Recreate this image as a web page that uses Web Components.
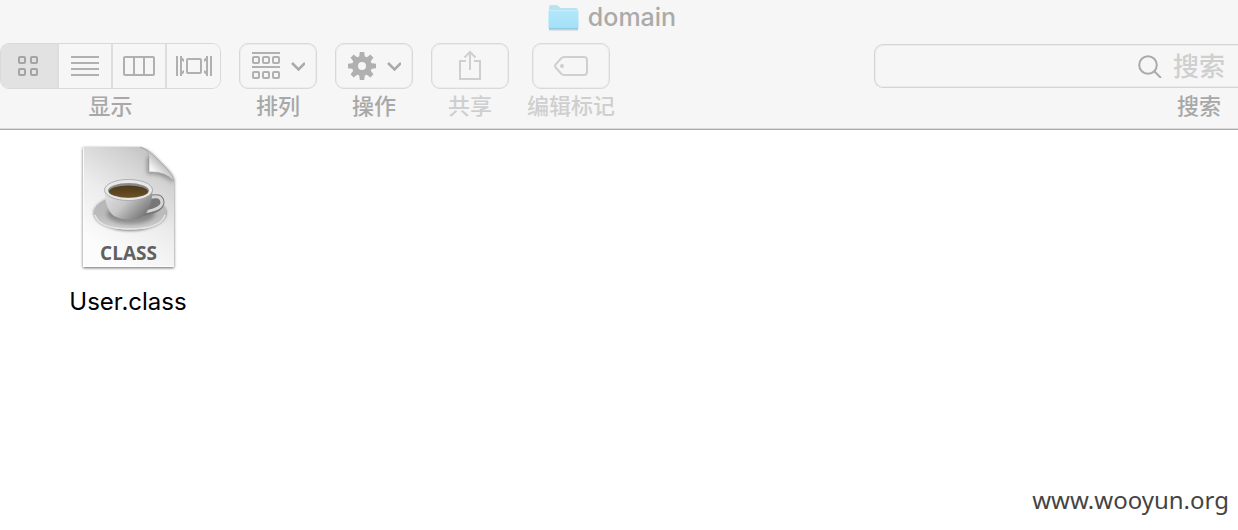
<!DOCTYPE html>
<html lang="zh-CN">
<head>
<meta charset="utf-8">
<title>domain</title>
<style>
body { margin: 0; background: #fff; font-family: Inter, "Noto Sans CJK SC", sans-serif; font-weight: 500; }
</style>
</head>
<body>
<finder-window></finder-window>

<template id="t-window">
<style>
:host { display: flex; flex-direction: column; min-height: 100vh; box-sizing: border-box; }
header { background: #f6f6f6; border-bottom: 1px solid #aaa; box-shadow: inset 0 -1px #dcdcdc; padding-bottom: 6px; }
.bar { display: flex; gap: 18px; align-items: flex-start; }
finder-search { margin-left: auto; }
main { flex: 1; padding: 10px 28px; }
footer { display: flex; justify-content: flex-end; padding: 0 9px 12px; font: 24px/36px "Noto Sans", sans-serif; color: #444; }
</style>
<header>
  <finder-title>domain</finder-title>
  <div class="bar">
    <tool-item>
      <view-switch slot="control"></view-switch>显示
    </tool-item>
    <tool-item>
      <tool-button slot="control" label="排列">
        <svg width="54" height="28" viewBox="0 0 54 28" fill="none" stroke="#b0b0b0" stroke-width="2">
          <path d="M1 1h28M1 15h28"/>
          <rect x="2" y="5" width="6" height="6" rx="1"/><rect x="12" y="5" width="6" height="6" rx="1"/><rect x="22" y="5" width="6" height="6" rx="1"/>
          <rect x="2" y="20" width="6" height="6" rx="1"/><rect x="12" y="20" width="6" height="6" rx="1"/><rect x="22" y="20" width="6" height="6" rx="1"/>
          <path d="M41 11l6.500 6.500L54 11" stroke="#aaa" stroke-width="2.500"/>
        </svg>
      </tool-button>排列
    </tool-item>
    <tool-item>
      <tool-button slot="control" label="操作">
        <svg width="54" height="28" viewBox="0 0 54 28">
          <g fill="#b0b0b0" transform="translate(15 14)">
            <path d="M-3-8L-2.200-14H2.200L3-8zM-3 8L-2.200 14H2.200L3 8zM-8-3L-14-2.200V2.200L-8 3zM8-3L14-2.200V2.200L8 3z"/>
            <path transform="rotate(45)" d="M-3-8L-2.200-14H2.200L3-8zM-3 8L-2.200 14H2.200L3 8zM-8-3L-14-2.200V2.200L-8 3zM8-3L14-2.200V2.200L8 3z"/>
            <circle r="7" fill="none" stroke="#b0b0b0" stroke-width="6"/>
          </g>
          <path d="M41 11l6.500 6.500L54 11" fill="none" stroke="#aaa" stroke-width="2.500"/>
        </svg>
      </tool-button>操作
    </tool-item>
    <tool-item disabled>
      <tool-button slot="control" label="共享" disabled>
        <svg width="24" height="32" viewBox="0 0 24 32" fill="none" stroke="#cfcfcf" stroke-width="2">
          <path d="M8 11H2v18h20V11h-6M12 20V2M6.500 7.500L12 2l5.500 5.500"/>
        </svg>
      </tool-button>共享
    </tool-item>
    <tool-item disabled>
      <tool-button slot="control" label="编辑标记" disabled>
        <svg width="34" height="22" viewBox="0 0 34 22" fill="none" stroke="#cfcfcf" stroke-width="2">
          <path d="M10 2H30a3 3 0 0 1 3 3V17a3 3 0 0 1-3 3H10Q8.500 20 7 18.500L1.500 12.500Q.7 11 1.500 9.500L7 3.500Q8.500 2 10 2z"/>
          <circle cx="8" cy="11" r="2" fill="#cfcfcf" stroke="none"/>
        </svg>
      </tool-button>编辑标记
    </tool-item>
    <finder-search></finder-search>
  </div>
</header>
<main><file-icon kind="CLASS">User.class</file-icon></main>
<footer>www.wooyun.org</footer>
</template>

<template id="t-title">
<style>
:host { display: flex; justify-content: center; align-items: center; gap: 9px; height: 34px; padding: 0 14px 9px 0; color: #aaa; }
h1 { margin: 0; font-size: 25px; line-height: 34px; font-weight: inherit; }
</style>
<svg width="31" height="27" viewBox="0 0 31 27">
  <defs><linearGradient id="f" x2="0" y2="1"><stop stop-color="#b4e7fa"/><stop offset="1" stop-color="#a2e0f7"/></linearGradient></defs>
  <path d="M1 25.500H30" stroke="#ccc" stroke-width="2"/>
  <path d="M1 3Q1 1 3 1H8Q10 1 11 2.500T14 4H28Q30 4 30 6V10H1z" fill="#b9e3f1"/>
  <rect x=".5" y="6" width="30" height="19" rx="1" fill="url(#f)"/>
  <path d="M1 6.500H30" stroke="#c9eefb"/><path d="M1 24.500H30" stroke="#8dcbe3"/>
</svg>
<h1><slot></slot></h1>
</template>

<template id="t-item">
<style>
:host { display: flex; flex-direction: column; align-items: center; color: #a8a8a8; font-size: 22px; line-height: 34px; white-space: nowrap; }
:host([disabled]) { color: #cfcfcf; }
</style>
<slot name="control"></slot><span><slot></slot></span>
</template>

<template id="t-button">
<style>
:host { display: block; }
button { display: flex; align-items: center; justify-content: center; width: 78px; height: 46px; padding: 0; border: 1px solid #d9d9d9; box-shadow: inset 0 0 0 1px #ececec; border-radius: 9px; background: #f6f6f6; }
</style>
<button><slot></slot></button>
</template>

<template id="t-switch">
<style>
:host { display: flex; box-sizing: border-box; height: 46px; border: 1px solid #d9d9d9; border-radius: 9px; overflow: hidden; }
button { display: flex; align-items: center; justify-content: center; box-sizing: border-box; width: 54px; padding: 0; border: 0; border-left: 2px solid #dedede; background: #f6f6f6; }
button[aria-pressed] { width: 56px; border: 0; padding-right: 2px; background: #e2e2e2; }
button:last-child { width: 55px; }
svg { fill: none; stroke: #b0b0b0; stroke-width: 2; }
button[aria-pressed] svg { stroke: #a4a4a4; }
</style>
<button aria-label="图标" aria-pressed="true"><svg width="20" height="20" viewBox="0 0 20 20"><rect x="1" y="1" width="6" height="6" rx="1"/><rect x="13" y="1" width="6" height="6" rx="1"/><rect x="1" y="13" width="6" height="6" rx="1"/><rect x="13" y="13" width="6" height="6" rx="1"/></svg></button>
<button aria-label="列表"><svg width="28" height="20" viewBox="0 0 28 20"><path d="M0 1h28M0 7h28M0 13h28M0 19h28"/></svg></button>
<button aria-label="分栏"><svg width="32" height="20" viewBox="0 0 32 20"><rect x="1" y="1" width="30" height="18" rx="1"/><path d="M11 1v18M21 1v18"/></svg></button>
<button aria-label="封面流"><svg width="36" height="22" viewBox="0 0 36 22"><path d="M1 1v20M35 1v20"/><path d="M5 1v20M31 1v20"/><path d="M5 2l3 2v3l-3-2M5 20l3-2v-3l-3 2M31 2l-3 2v3l3-2M31 20l-3-2v-3l3 2" fill="#b0b0b0" stroke="none"/><rect x="11" y="4" width="14" height="14" rx="1"/></svg></button>
</template>

<template id="t-search">
<style>
:host { display: flex; flex-direction: column; width: 364px; color: #a8a8a8; }
.box { display: flex; align-items: center; justify-content: flex-end; gap: 11px; box-sizing: border-box; height: 44px; margin: 1px 0; border: 1px solid #d4d4d4; border-right: 0; box-shadow: inset 1px 1px #ececec, inset 0 -1px #ececec; border-radius: 9px 0 0 9px; }
input { width: 65px; height: 40px; box-sizing: border-box; padding: 0; border: 0; outline: 0; background: none; font: inherit; font-size: 26px; color: #888; }
input::placeholder { color: #cfcfcf; opacity: 1; }
label { align-self: flex-end; padding-right: 17px; font-size: 22px; line-height: 34px; }
</style>
<div class="box">
  <svg width="24" height="24" viewBox="0 0 24 24" fill="none" stroke="#aaa" stroke-width="2"><circle cx="10" cy="11" r="8.800"/><path d="M16 17l7 7"/></svg>
  <input id="q" type="text" placeholder="搜索">
</div>
<label for="q">搜索</label>
</template>

<template id="t-file">
<style>
:host { display: inline-flex; flex-direction: column; align-items: center; width: 200px; color: #000; font-size: 24px; font-weight: 400; line-height: 32px; }
svg { display: block; margin-bottom: 10px; }
text { font: 700 19px "Open Sans", sans-serif; fill: #606060; }
</style>
<svg width="112" height="136" viewBox="72 140 112 136" role="img" aria-label="Java class">
  <defs>
    <linearGradient id="paper" x1="1" y1="0" x2=".5" y2="1"><stop stop-color="#b4b4b4"/><stop offset=".25" stop-color="#d0d0d0"/><stop offset=".6" stop-color="#ececec"/><stop offset="1" stop-color="#fcfcfc"/></linearGradient>
    <linearGradient id="fold" x1="0" y1="1" x2=".6" y2=".4"><stop stop-color="#fff"/><stop offset=".6" stop-color="#f4f4f4"/><stop offset="1" stop-color="#bbb"/></linearGradient>
    <linearGradient id="cup" x1="0" x2="1" y2=".6"><stop stop-color="#e4e4e4"/><stop offset=".5" stop-color="#c8c8c8"/><stop offset="1" stop-color="#777"/></linearGradient>
    <linearGradient id="dish" x2="0" y2="1"><stop stop-color="#b5b5b5"/><stop offset=".6" stop-color="#bbb"/><stop offset="1" stop-color="#d0d0d0"/></linearGradient>
    <linearGradient id="coffee" x2="0" y2="1"><stop stop-color="#4b3a1a"/><stop offset="1" stop-color="#6b5024"/></linearGradient>
    <filter id="s" x="-20%" y="-20%" width="140%" height="140%"><feDropShadow dx="0" dy="1" stdDeviation="1.500" flood-opacity=".6"/></filter>
    <filter id="soft" x="-30%" y="-30%" width="160%" height="160%"><feGaussianBlur stdDeviation="2"/></filter>
  </defs>
  <path d="M83 147H139Q148 148 155 156L166 167Q174 175 174 183V267H83z" fill="url(#paper)" filter="url(#s)"/>
  <path d="M83.500 147.500V266.500H173.500" fill="none" stroke="#fff" opacity=".8"/>
  <path d="M147 158V174Q162 173 173 183V178L150 155z" fill="#555" opacity=".5" filter="url(#soft)"/>
  <path d="M140 147Q149 149 149 157V172Q165 171 174 181Q173 175 167 169L154 156Q148 149 140 147z" fill="url(#fold)" stroke="#999" stroke-width=".5"/>
  <g filter="url(#s)">
    <ellipse cx="130" cy="212" rx="36" ry="17.500" fill="url(#dish)"/>
  </g>
  <path d="M95 215Q99 229 130 229Q161 229 165 215" fill="none" stroke="#e5e5e5" stroke-width="1.500"/>
  <ellipse cx="131" cy="214" rx="24" ry="10" fill="#666" opacity=".6" filter="url(#soft)"/>
  <path d="M149 198Q161 194 162 202Q162 210 145 213L150 198z" fill="#777" stroke="#777" stroke-width="5"/>
  <path d="M149 198Q161 194 162 202Q162 209 146 211.500" fill="none" stroke="#d5d5d5" stroke-width="3"/>
  <path d="M104.500 190Q105 209 114 216Q121 219.500 129 219.500Q137 219.500 143 216Q152 209 152.500 190z" fill="url(#cup)"/>
  <ellipse cx="128.500" cy="190" rx="24" ry="10.500" fill="#e8e8e8" stroke="#999" stroke-width=".7"/>
  <ellipse cx="128.500" cy="190.500" rx="20.500" ry="7.500" fill="#8a8a8a"/>
  <ellipse cx="128.500" cy="191.500" rx="19.500" ry="6" fill="url(#coffee)"/>
  <text x="128.500" y="260" text-anchor="middle"></text>
</svg>
<span><slot></slot></span>
</template>

<script>
const define = (name, templateId, setup) => customElements.define(name, class extends HTMLElement {
  constructor() {
    super();
    this.attachShadow({ mode: 'open' }).append(document.getElementById(templateId).content.cloneNode(true));
  }
  connectedCallback() { if (setup) setup(this, this.shadowRoot); }
});
define('finder-title', 't-title');
define('tool-item', 't-item');
define('tool-button', 't-button', (host, root) => {
  const button = root.querySelector('button');
  button.setAttribute('aria-label', host.getAttribute('label'));
  button.disabled = host.hasAttribute('disabled');
});
define('view-switch', 't-switch');
define('finder-search', 't-search');
define('file-icon', 't-file', (host, root) => {
  root.querySelector('text').textContent = host.getAttribute('kind');
});
define('finder-window', 't-window');
</script>
</body>
</html>
